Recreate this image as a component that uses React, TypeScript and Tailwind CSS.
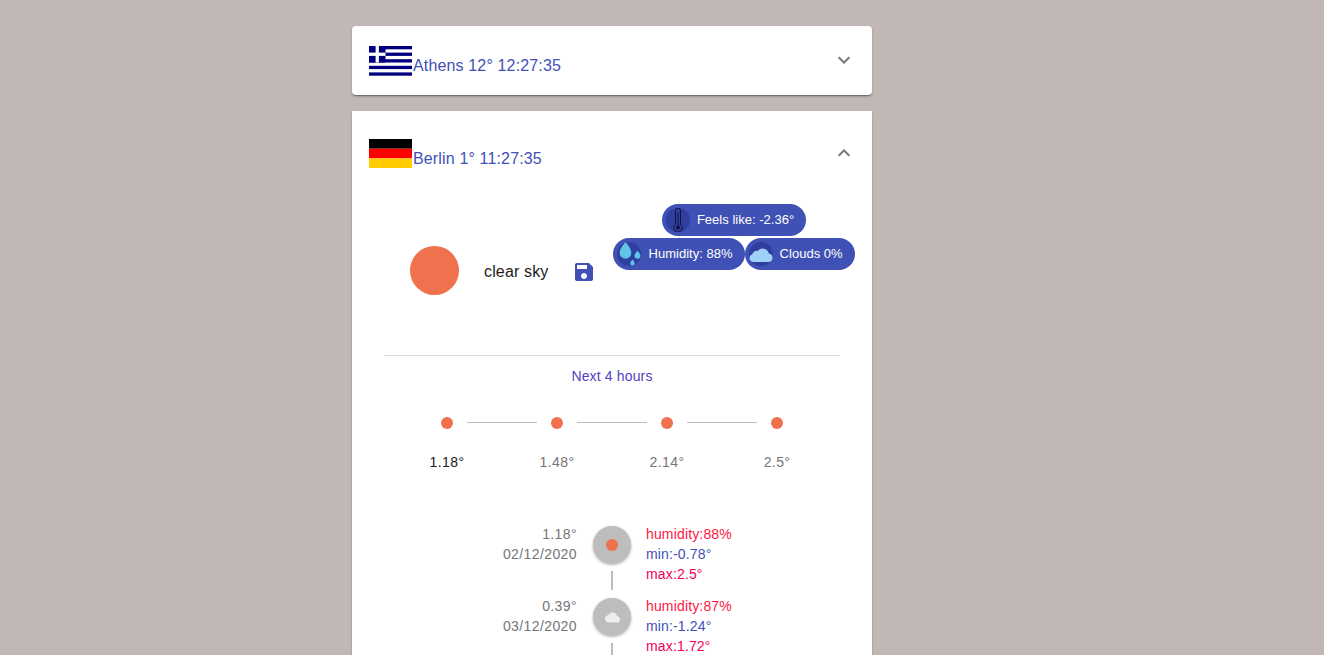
import React from 'react';

const GreeceFlag = () => (
  <svg width="43" height="30" viewBox="0 0 43 30" className="shrink-0">
    <rect width="43" height="30" fill="#fff" />
    {[0, 6.6, 13.2, 19.8, 26.4].map((y) => (
      <rect key={y} x="0" y={y} width="43" height="3.3" fill="#00007f" />
    ))}
    <rect width="16.5" height="16.5" fill="#00007f" />
    <rect x="6.6" width="3.3" height="16.5" fill="#fff" />
    <rect y="6.6" width="16.5" height="3.3" fill="#fff" />
  </svg>
);

const GermanyFlag = () => (
  <svg width="43" height="29" viewBox="0 0 43 29" className="shrink-0">
    <rect width="43" height="9.7" fill="#000" />
    <rect y="9.7" width="43" height="9.7" fill="#f00" />
    <rect y="19.4" width="43" height="9.6" fill="#fc0" />
  </svg>
);

const Chevron = ({ up }: { up?: boolean }) => (
  <svg width="24" height="24" viewBox="0 0 24 24" fill="#757575">
    <path d={up ? 'M12 8l-6 6 1.410 1.410L12 10.830l4.590 4.580L18 14z' : 'M16.590 8.590L12 13.170 7.410 8.590 6 10l6 6 6-6z'} />
  </svg>
);

const Thermometer = () => (
  <svg width="24" height="24" viewBox="0 0 24 24" className="shrink-0">
    <circle cx="12" cy="12" r="12" fill="#303f9f" />
    <path d="M9.500 2.500a2.500 2.500 0 0 1 5 0v13.700a4.300 4.300 0 1 1-5 0z" fill="#2f3b96" stroke="#0d1440" strokeWidth="1" />
    <circle cx="12" cy="19.500" r="2" fill="#0d1440" />
    <path d="M12 5v13" stroke="#0d1440" strokeWidth="0.8" />
  </svg>
);

const Drops = () => (
  <svg width="24" height="24" viewBox="0 0 24 24" className="shrink-0">
    <circle cx="12" cy="12" r="12" fill="#303f9f" />
    <path d="M8.500 0c3 3.800 5.800 7 5.800 11a5.800 5.800 0 0 1-11.600 0C2.700 7 5.500 3.800 8.500 0z" fill="#5ec4e8" />
    <path d="M20.500 8.500c1.500 2.200 3 3.600 3 5.200a3 3 0 0 1-6 0c0-1.600 1.500-3 3-5.200z" fill="#5ec4e8" />
    <path d="M15.500 17.500c1 1.200 2.200 2.400 2.200 3.700a2.200 2.200 0 0 1-4.400 0c0-1.300 1.200-2.500 2.200-3.700z" fill="#5ec4e8" />
  </svg>
);

const Cloud = () => (
  <svg width="24" height="24" viewBox="0 0 24 24" className="shrink-0">
    <circle cx="12" cy="12" r="12" fill="#303f9f" />
    <path d="M4.500 20a4 4 0 0 1-1.200-7.800 4.500 4.500 0 0 1 5.500-3.200 6.200 6.200 0 0 1 11 2.500A4.300 4.300 0 0 1 20 20z" fill="#a0d2f8" />
  </svg>
);

const SaveIcon = () => (
  <svg width="24" height="24" viewBox="0 0 24 24" fill="#3f51b5">
    <path d="M17 3H5c-1.110 0-2 .9-2 2v14c0 1.100.89 2 2 2h14c1.100 0 2-.9 2-2V7l-4-4zm-5 16c-1.660 0-3-1.340-3-3s1.340-3 3-3 3 1.340 3 3-1.340 3-3 3zm3-10H5V5h10v4z" />
  </svg>
);

const SmallCloud = () => (
  <svg width="15" height="15" viewBox="0 0 24 24" fill="#eeeeee">
    <path d="M19.350 10.040C18.670 6.590 15.640 4 12 4 9.110 4 6.600 5.640 5.350 8.040 2.340 8.360 0 10.910 0 14c0 3.310 2.690 6 6 6h13c2.760 0 5-2.240 5-5 0-2.640-2.050-4.780-4.650-4.960z" />
  </svg>
);

const Chip = ({ icon, label }: { icon: React.ReactNode; label: string }) => (
  <div className="flex h-8 items-center gap-[7px] rounded-2xl bg-[#3f51b5] pl-[4px] pr-3 text-[13px] tracking-[0.02px] text-white">
    {icon}
    <span>{label}</span>
  </div>
);

const steps = ['1.18°', '1.48°', '2.14°', '2.5°'];

const timeline = [
  { temp: '1.18°', date: '02/12/2020', humidity: '88%', min: '-0.78°', max: '2.5°', icon: <span className="h-3 w-3 rounded-full bg-[#f0714d]" /> },
  { temp: '0.39°', date: '03/12/2020', humidity: '87%', min: '-1.24°', max: '1.72°', icon: <SmallCloud /> },
];

const cardShadow = 'shadow-[0_2px_2px_-1px_rgba(0,0,0,0.3),0_1px_1px_0_rgba(0,0,0,0.14),0_1px_3px_0_rgba(0,0,0,0.12)]';

export default function App() {
  return (
    <div className="h-[655px] overflow-hidden bg-[#c1b8b5] pt-[26px] font-['Liberation_Sans',sans-serif] tracking-[0.15px]">
      <div className="ml-[352px] w-[520px]">
        <div className={`flex h-[69px] items-start justify-between rounded bg-white pl-[17px] pr-4 ${cardShadow}`}>
          <div className="mt-[20px] flex items-end">
            <GreeceFlag />
            <span className="mb-px ml-px text-[16px] leading-[19px] text-[#3f51b5]">Athens 12° 12:27:35</span>
          </div>
          <div className="mt-[22px]"><Chevron /></div>
        </div>

        <div className={`mt-4 bg-white pb-10 ${cardShadow}`}>
          <div className="flex items-start justify-between pl-[17px] pr-4 pt-7">
            <div className="flex items-end">
              <GermanyFlag />
              <span className="ml-px text-[16px] leading-[19px] text-[#3f51b5]">Berlin 1° 11:27:35</span>
            </div>
            <div className="mt-[2px]"><Chevron up /></div>
          </div>

          <div className="mt-9 flex items-start pl-[58px]">
            <div className="mt-[42px] flex items-center">
              <div className="h-[49px] w-[49px] rounded-full bg-[#f0714d]" />
              <span className="ml-[25px] mt-[2px] text-[16px] text-[#212121]">clear sky</span>
              <div className="ml-[24px] mt-[2px] h-6 w-6"><SaveIcon /></div>
            </div>
            <div className="ml-[17px] flex flex-col items-center gap-[2px]">
              <Chip icon={<Thermometer />} label="Feels like: -2.36°" />
              <div className="flex">
                <Chip icon={<Drops />} label="Humidity: 88%" />
                <Chip icon={<Cloud />} label="Clouds 0%" />
              </div>
            </div>
          </div>

          <div className="mx-8 mt-[60px] border-t border-[#dcdcdc]" />
          <p className="mt-3 text-center text-[14px] leading-4 text-[#5044c0]">Next 4 hours</p>

          <div className="mt-[33px] flex justify-center">
            {steps.map((s, i) => (
              <div key={s} className="relative flex w-[110px] flex-col items-center">
                <span className="h-3 w-3 rounded-full bg-[#f0714d]" />
                {i < 3 && <span className="absolute left-[75px] top-[5px] h-px w-[70px] bg-[#bdbdbd]" />}
                <span className={`mt-[25px] text-[14px] leading-4 tracking-[0.4px] ${i === 0 ? 'text-[#212121]' : 'text-[#757575]'}`}>{s}</span>
              </div>
            ))}
          </div>

          <div className="mt-[54px] text-[14px] leading-5">
            {timeline.map((t) => (
              <div key={t.date} className="flex h-[72px] justify-center">
                <div className="w-[225px] pr-4 text-right tracking-[0.4px] text-[#757575]">
                  <p>{t.temp}</p>
                  <p>{t.date}</p>
                </div>
                <div className="flex w-[38px] flex-col items-center">
                  <div className="mt-[2px] flex h-[38px] w-[38px] items-center justify-center rounded-full bg-[#bdbdbd] shadow-[0_1px_3px_rgba(0,0,0,0.3)]">
                    {t.icon}
                  </div>
                  <div className="mt-[7px] h-[19px] w-0.5 bg-[#bdbdbd]" />
                </div>
                <div className="w-[225px] pl-[15px]">
                  <p className="text-[#ff1744]">humidity:{t.humidity}</p>
                  <p className="text-[#3f51b5]">min:{t.min}</p>
                  <p className="text-[#f50057]">max:{t.max}</p>
                </div>
              </div>
            ))}
          </div>
        </div>
      </div>
    </div>
  );
}
